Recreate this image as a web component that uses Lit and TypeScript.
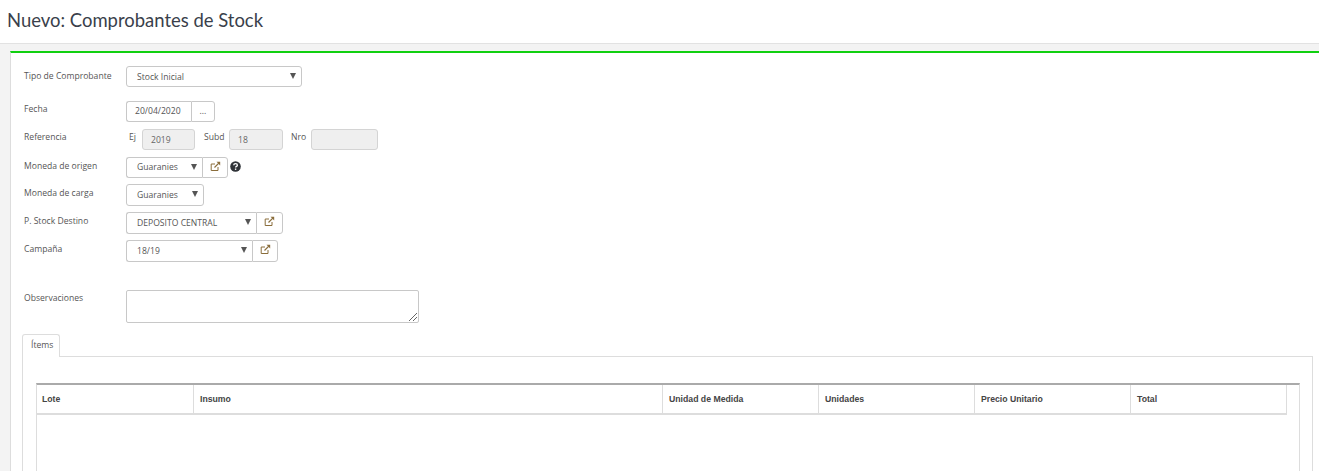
import { LitElement, html, css, svg } from "lit";
import { customElement } from "lit/decorators.js";

const ext = svg`<svg class="ext" width="11" height="11" viewBox="0 0 11 11" fill="none"><path d="M8 6V9.5H1.2V3H5" stroke="#8a6d3b" stroke-width="1"/><path d="M4.5 6.5L8.8 2.2" stroke="#8a6d3b" stroke-width="1.2"/><path d="M6.5 0.8H10.2V4.5Z" fill="#8a6d3b"/></svg>`;
const caret = html`<span class="caret"></span>`;

@customElement("app-root")
export class AppRoot extends LitElement {
  static styles = css`
    :host { display: block; width: 1319px; height: 471px; overflow: hidden; background: #fff; font-family: "Open Sans", sans-serif; font-size: 8.6px; color: #555; }
    .title { height: 43px; box-sizing: border-box; padding: 8px 0 0 7px; font: 18.47px/24px Lato, sans-serif; color: #3a3f4b; background: #fff; }
    .page { background: #f3f3f3; border-top: 1px solid #e2e2e2; padding: 7px 0 0 10px; height: 420px; }
    .panel { background: #fff; border-top: 2px solid #10d010; border-left: 1px solid #ddd; height: 420px; box-sizing: border-box; padding-top: 13px; }
    .row { display: flex; align-items: flex-start; padding-left: 13px; }
    .label { width: 102px; flex: none; line-height: 12px; }
    .ctl { box-sizing: border-box; height: 100%; border: 1px solid #c8c8c8; border-radius: 3px; background: #fff; display: flex; align-items: center; color: #555; white-space: nowrap; padding-bottom: 1px; }
    .r1 .ctl { padding-bottom: 0; }
    .sel { padding-left: 10px; justify-content: space-between; padding-right: 5px; }
    .caret { width: 0; height: 0; margin-top: -1px; border-left: 3.5px solid transparent; border-right: 3.5px solid transparent; border-top: 6px solid #555; }
    .group { display: flex; height: 100%; }
    .group .ctl:first-child { border-radius: 3px 0 0 3px; border-right: none; }
    .btn { border-radius: 0 3px 3px 0; justify-content: center; border-left: 1px solid #c8c8c8; padding-bottom: 3px; }
    .btn.dots { padding-bottom: 1px; }
    .r1 { height: 21px; margin-bottom: 14px; }
    .r2 { height: 21px; margin-bottom: 7px; }
    .r3 { height: 21px; margin-bottom: 7px; }
    .r4 { height: 21px; margin-bottom: 6px; }
    .r5 { height: 22px; margin-bottom: 6px; }
    .r6 { height: 22px; margin-bottom: 6px; }
    .r7 { height: 22px; margin-bottom: 28px; }
    .r1 .label { padding-top: 4px; }
    .r2 .label, .r3 .label { padding-top: 2px; }
    .r4 .label, .r5 .label, .r6 .label, .r7 .label { padding-top: 3px; }
    .pre { line-height: 12px; padding-top: 2px; flex: none; box-sizing: border-box; }
    .pre-ej { width: 16px; padding-left: 3px; }
    .pre-subd { width: 34px; padding-left: 9px; }
    .pre-nro { width: 28px; padding-left: 8px; }
    .ro { box-sizing: border-box; height: 21px; border: 1px solid #d4d4d4; border-radius: 3px; background: #efefef; color: #666; display: flex; align-items: center; padding-left: 8px; flex: none; }
    .w-ej { width: 53px; }
    .w-subd { width: 54px; }
    .w-nro { width: 67px; }
    .w-tipo { width: 176px; }
    .w-date { width: 65px; padding-left: 8px; }
    .w-dots { width: 24px; }
    .w-orig { width: 76px; }
    .w-carga { width: 78px; }
    .w-dest { width: 130px; }
    .w-camp { width: 126px; }
    .w-btn { width: 26px; }
    .w-btn-l { width: 27px; }
    .help { margin: 4px 0 0 2px; flex: none; }
    .ta { box-sizing: border-box; width: 293px; height: 33px; border: 1px solid #c8c8c8; border-radius: 2px; position: relative; }
    .grip { position: absolute; right: 0; bottom: 0; }
    .r8 { height: 33px; margin-bottom: 11px; }
    .r8 .label { padding-top: 2px; }
    .tabs { margin-left: 11px; display: flex; }
    .tab { box-sizing: border-box; width: 38px; height: 23px; border: 1px solid #ddd; border-bottom: none; border-radius: 3px 3px 0 0; padding: 4px 0 0 8px; line-height: 12px; background: #fff; position: relative; z-index: 1; color: #555; }
    .pane { margin: -1px 6px 0 11px; border: 1px solid #ddd; height: 200px; padding: 26px 12px 0 13px; box-sizing: border-box; }
    .table { border-top: 2px solid #aaa; border-left: 1px solid #ddd; border-right: 1px solid #ddd; height: 200px; }
    .head { display: flex; width: 1250px; height: 30px; box-sizing: border-box; border-bottom: 2px solid #ddd; }
    .th { box-sizing: border-box; border-right: 1px solid #ddd; padding: 0 0 0 6px; font: bold 8.7px/28px "Liberation Sans", Arial, sans-serif; color: #444; flex: none; }
    .tl { width: 157px; padding-left: 5px; }
    .ti { width: 469px; }
    .tu { width: 156px; }
  `;

  render() {
    return html`
      <div class="title">Nuevo: Comprobantes de Stock</div>
      <div class="page"><div class="panel">
        <div class="row r1"><div class="label">Tipo de Comprobante</div><div class="ctl sel w-tipo">Stock Inicial${caret}</div></div>
        <div class="row r2"><div class="label">Fecha</div><div class="group"><div class="ctl w-date">20/04/2020</div><div class="ctl btn dots w-dots">...</div></div></div>
        <div class="row r3"><div class="label">Referencia</div>
          <div class="pre pre-ej">Ej</div><div class="ro w-ej">2019</div>
          <div class="pre pre-subd">Subd</div><div class="ro w-subd">18</div>
          <div class="pre pre-nro">Nro</div><div class="ro w-nro"></div></div>
        <div class="row r4"><div class="label">Moneda de origen</div><div class="group"><div class="ctl sel w-orig">Guaranies${caret}</div><div class="ctl btn w-btn">${ext}</div></div>
          <svg class="help" width="11" height="11" viewBox="0 0 11 11"><circle cx="5.5" cy="5.5" r="5.3" fill="#2f3338"/><path d="M3.7 4.2C3.8 2 7.4 2 7.4 4.2C7.4 5.4 5.6 5.4 5.6 6.6" fill="none" stroke="#fff" stroke-width="1.3"/><rect x="4.9" y="7.5" width="1.4" height="1.4" fill="#fff"/></svg></div>
        <div class="row r5"><div class="label">Moneda de carga</div><div class="ctl sel w-carga">Guaranies${caret}</div></div>
        <div class="row r6"><div class="label">P. Stock Destino</div><div class="group"><div class="ctl sel w-dest">DEPOSITO CENTRAL${caret}</div><div class="ctl btn w-btn-l">${ext}</div></div></div>
        <div class="row r7"><div class="label">Campaña</div><div class="group"><div class="ctl sel w-camp">18/19${caret}</div><div class="ctl btn w-btn">${ext}</div></div></div>
        <div class="row r8"><div class="label">Observaciones</div><div class="ta"><svg class="grip" width="10" height="10" viewBox="0 0 10 10"><path d="M1 9L9 1M5 9L9 5" stroke="#666" stroke-width="1"/></svg></div></div>
        <div class="tabs"><div class="tab">Ítems</div></div>
        <div class="pane"><div class="table"><div class="head">
          <div class="th tl">Lote</div><div class="th ti">Insumo</div><div class="th tu">Unidad de Medida</div><div class="th tu">Unidades</div><div class="th tu">Precio Unitario</div><div class="th tu">Total</div>
        </div></div></div>
      </div></div>`;
  }
}
